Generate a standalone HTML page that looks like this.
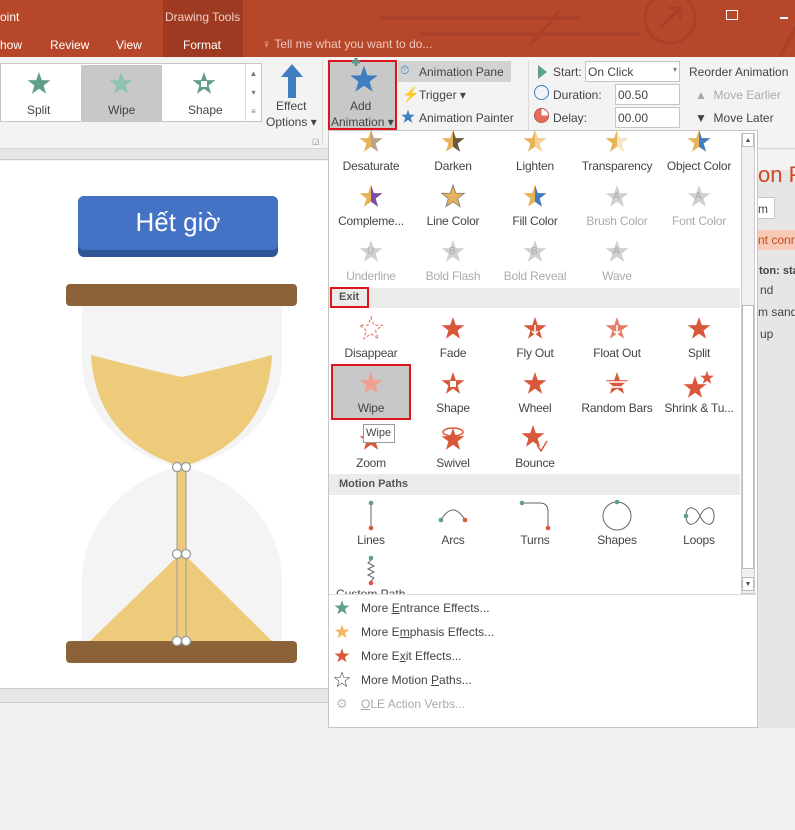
<!DOCTYPE html>
<html><head><meta charset="utf-8"><style>
*{margin:0;padding:0;box-sizing:border-box}
body{width:795px;height:728px;overflow:hidden;position:relative;background:#f0f0f0;font-family:"Liberation Sans",sans-serif;font-size:12px;color:#444}
.a{position:absolute;white-space:nowrap}
.c{position:absolute;text-align:center;width:82px;white-space:nowrap;font-size:12px;color:#444;letter-spacing:-0.2px}
.g{color:#aaa}
svg{position:absolute;overflow:visible}
.mi{position:absolute;left:361px;font-size:12px;color:#444}
</style></head><body>
<svg width="0" height="0"><defs>
<polygon id="st" points="0,-12 2.8,-3.9 11.4,-3.7 4.6,1.5 7.1,9.7 0,4.8 -7.1,9.7 -4.6,1.5 -11.4,-3.7 -2.8,-3.9"/>
</defs></svg>
<!-- title bar -->
<div class="a" style="left:0;top:0;width:795px;height:57px;background:#b7472a"></div>
<div class="a" style="left:163px;top:0;width:80px;height:57px;background:#9e3a21"></div>
<svg style="left:380px;top:0" width="415" height="57"><g stroke="#a8402a" stroke-width="3" fill="none"><circle cx="290" cy="18" r="25"/><path d="M280 28 L300 8 M288 8 h12 v12"/><path d="M0 18 H200 M40 34 H260 M150 45 L180 10"/><path d="M400 57 L430 0"/></g></svg>
<div class="a" style="left:0;top:10px;color:#fff;font-size:12px">oint</div>
<div class="a" style="left:165px;top:10px;color:#f0d0c4;font-size:12px">Drawing Tools</div>
<div class="a" style="left:0;top:38px;color:#fff">how</div>
<div class="a" style="left:50px;top:38px;color:#fff">Review</div>
<div class="a" style="left:116px;top:38px;color:#fff">View</div>
<div class="a" style="left:183px;top:38px;color:#fff">Format</div>
<div class="a" style="left:262px;top:37px;color:#f0c8bb">♀&nbsp;Tell me what you want to do...</div>
<div class="a" style="left:726px;top:10px;width:12px;height:10px;border:1px solid #fff"></div>
<div class="a" style="left:780px;top:17px;width:8px;height:2px;background:#fff"></div>
<!-- ribbon -->
<div class="a" style="left:0;top:57px;width:795px;height:92px;background:#f3f3f3;border-bottom:1px solid #d5d5d5"></div>
<div class="a" style="left:0;top:149px;width:330px;height:11px;background:#e6e6e6;border-bottom:1px solid #c8c8c8"></div>
<div class="a" style="left:0;top:63px;width:262px;height:59px;background:#fff;border:1px solid #c6c6c6"></div>
<div class="a" style="left:81px;top:65px;width:81px;height:56px;background:#c8c8c8"></div>
<div class="a" style="left:245px;top:64px;width:16px;height:57px;border-left:1px solid #ddd;font-size:8px;color:#777;text-align:center;line-height:19px">▲<br>▾<br>≡</div>
<svg style="left:39px;top:84px"><use href="#st" fill="#5f9e8a"/></svg>
<svg style="left:121px;top:84px"><use href="#st" fill="#8ec3b1"/></svg>
<svg style="left:204px;top:84px"><use href="#st" fill="#5f9e8a"/><rect x="-3" y="-3" width="6" height="6" fill="#fff"/></svg>
<div class="a" style="left:27px;top:103px">Split</div>
<div class="a" style="left:108px;top:103px">Wipe</div>
<div class="a" style="left:188px;top:103px">Shape</div>
<svg style="left:280px;top:64px" width="24" height="36"><path d="M12 0 L23 13 H16 V34 H8 V13 H1 Z" fill="#3f7ec1"/></svg>
<div class="a" style="left:276px;top:99px">Effect</div>
<div class="a" style="left:266px;top:115px">Options ▾</div>
<div class="a" style="left:312px;top:137px;font-size:8px;color:#888">◲</div>
<div class="a" style="left:322px;top:60px;width:1px;height:85px;background:#dadada"></div>
<!-- Add animation -->
<div class="a" style="left:328px;top:60px;width:69px;height:70px;background:#c8c8c8;border:2px solid #e0141e"></div>
<svg style="left:364px;top:80px"><use href="#st" fill="#3f7ec1" transform="scale(1.2)"/><path d="M-12 -18 h8 M-8 -22 v8" stroke="#5f9e8a" stroke-width="3"/></svg>
<div class="a" style="left:350px;top:99px">Add</div>
<div class="a" style="left:331px;top:115px">Animation ▾</div>
<div class="a" style="left:398px;top:61px;width:113px;height:21px;background:#d2d2d2"></div>
<div class="a" style="left:400px;top:63px;color:#3f7ec1;font-size:12px">⏱</div>
<div class="a" style="left:419px;top:65px">Animation Pane</div>
<div class="a" style="left:402px;top:86px;color:#f2c230;font-size:14px">⚡</div>
<div class="a" style="left:419px;top:88px">Trigger ▾</div>
<svg style="left:408px;top:117px"><use href="#st" fill="#3f7ec1" transform="scale(.6)"/></svg>
<div class="a" style="left:419px;top:111px">Animation Painter</div>
<div class="a" style="left:528px;top:60px;width:1px;height:85px;background:#dadada"></div>
<svg style="left:538px;top:65px" width="10" height="14"><path d="M0 0 L9 7 L0 14Z" fill="#5f9e8a"/></svg>
<div class="a" style="left:553px;top:65px">Start:</div>
<div class="a" style="left:585px;top:61px;width:95px;height:21px;background:#fff;border:1px solid #c6c6c6;padding:3px 2px">On Click<span style="float:right;font-size:8px;color:#777">▾</span></div>
<div class="a" style="left:534px;top:85px;width:15px;height:15px;border:1.5px solid #3f7ec1;border-radius:50%"></div>
<div class="a" style="left:553px;top:88px">Duration:</div>
<div class="a" style="left:615px;top:84px;width:65px;height:21px;background:#fff;border:1px solid #c6c6c6;padding:3px 2px">00.50</div>
<div class="a" style="left:534px;top:108px;width:15px;height:15px;border:1.5px solid #c0504d;border-radius:50%;background:conic-gradient(#fff 0 25%,#e36c5a 25% 100%)"></div>
<div class="a" style="left:553px;top:111px">Delay:</div>
<div class="a" style="left:615px;top:107px;width:65px;height:21px;background:#fff;border:1px solid #c6c6c6;padding:3px 2px">00.00</div>
<div class="a" style="left:689px;top:65px">Reorder Animation</div>
<div class="a" style="left:695px;top:88px;color:#aaa">▲ &nbsp;Move Earlier</div>
<div class="a" style="left:695px;top:111px">▼ &nbsp;Move Later</div>
<!-- slide -->
<div class="a" style="left:0;top:161px;width:330px;height:527px;background:#fff"></div>
<div class="a" style="left:0;top:688px;width:330px;height:15px;background:#e6e6e6;border-top:1px solid #ccc;border-bottom:1px solid #ccc"></div>
<div class="a" style="left:78px;top:196px;width:200px;height:61px;background:#2f5597;border-radius:6px"></div>
<div class="a" style="left:78px;top:196px;width:200px;height:54px;background:#4472c4;border-radius:6px;color:#fff;font-size:26px;text-align:center;line-height:52px">Hết giờ</div>
<svg style="left:0;top:0" width="330" height="700">
<path d="M82 305 H282 V360 C282 420 230 460 182 467 C230 474 282 520 282 580 V641 H82 V580 C82 520 134 474 182 467 C134 460 82 420 82 360 Z" fill="#f4f4f5"/>
<path d="M91 355 Q140 368 182 377 Q224 368 272 355 Q268 440 182 467 Q96 440 91 355Z" fill="#edcb7a"/>
<path d="M182 552 L272 641 H90 Z" fill="#edcb7a"/>
<rect x="177" y="467" width="9" height="174" fill="#edcb7a" stroke="#999" stroke-width="1"/>
<rect x="66" y="284" width="231" height="22" rx="4" fill="#8c6239"/>
<rect x="66" y="641" width="231" height="22" rx="4" fill="#8c6239"/>
<g fill="#fff" stroke="#999" stroke-width="1.3"><circle cx="177" cy="467" r="4.5"/><circle cx="186" cy="467" r="4.5"/><circle cx="177" cy="554" r="4.5"/><circle cx="186" cy="554" r="4.5"/><circle cx="177" cy="641" r="4.5"/><circle cx="186" cy="641" r="4.5"/></g>
</svg>
<!-- right pane -->
<div class="a" style="left:757px;top:150px;width:38px;height:578px;background:#e6e6e6"></div>
<div class="a" style="left:758px;top:150px;width:37px;height:20px;background:#f3f3f3"></div>
<div class="a" style="left:758px;top:162px;color:#d24726;font-size:22px">on P</div>
<div class="a" style="left:755px;top:197px;width:20px;height:22px;background:#fff;border:1px solid #c6c6c6;padding:4px 2px">m</div>
<div class="a" style="left:757px;top:230px;width:38px;height:20px;background:#f8c9b5;padding:3px 1px;color:#c04a20">nt conn</div>
<div class="a" style="left:759px;top:265px;font-weight:bold;font-size:11px">ton: sta</div>
<div class="a" style="left:760px;top:283px">nd</div>
<div class="a" style="left:758px;top:305px">m sand</div>
<div class="a" style="left:760px;top:327px">up</div>
<!-- dropdown -->
<div class="a" style="left:328px;top:130px;width:430px;height:598px;background:#fff;border:1px solid #c6c6c6"></div>
<div class="a" style="left:741px;top:133px;width:14px;height:461px;background:#f0f0f0;border:1px solid #ccc"></div>
<div class="a" style="left:742px;top:133px;width:12px;height:14px;font-size:7px;text-align:center;line-height:14px;color:#555;border:1px solid #bbb;background:#fff">▲</div>
<div class="a" style="left:742px;top:305px;width:12px;height:264px;background:#fff;border:1px solid #bbb"></div>
<div class="a" style="left:742px;top:577px;width:12px;height:14px;font-size:7px;text-align:center;line-height:14px;color:#555;border:1px solid #bbb;background:#fff">▼</div>
<div class="a" style="left:329px;top:288px;width:411px;height:20px;background:#ebebeb"></div>
<div class="a" style="left:330px;top:287px;width:39px;height:21px;border:2px solid #e0141e"></div>
<div class="a" style="left:339px;top:291px;font-weight:bold;font-size:11px;color:#555">Exit</div>
<div class="a" style="left:329px;top:474px;width:411px;height:21px;background:#ebebeb"></div>
<div class="a" style="left:339px;top:478px;font-weight:bold;font-size:11px;color:#555">Motion Paths</div>
<div class="a" style="left:331px;top:364px;width:80px;height:56px;background:#c8c8c8;border:2px solid #e0141e"></div>
<!-- emphasis stars -->
<svg style="left:371px;top:142px"><use href="#st" fill="#e8b25a"/><path d="M0 -12 V4.8 L7.1 9.7 4.6 1.5 11.4 -3.7 2.8 -3.9Z" fill="#b5a58c"/></svg>
<svg style="left:453px;top:142px"><use href="#st" fill="#e8b25a"/><path d="M0 -12 V4.8 L7.1 9.7 4.6 1.5 11.4 -3.7 2.8 -3.9Z" fill="#6a5a40"/></svg>
<svg style="left:535px;top:142px"><use href="#st" fill="#e8b25a"/><path d="M0 -12 V4.8 L7.1 9.7 4.6 1.5 11.4 -3.7 2.8 -3.9Z" fill="#f3d39a"/></svg>
<svg style="left:617px;top:142px"><use href="#st" fill="#e8b25a"/><path d="M0 -12 V4.8 L7.1 9.7 4.6 1.5 11.4 -3.7 2.8 -3.9Z" fill="#f8e6c8"/></svg>
<svg style="left:699px;top:142px"><use href="#st" fill="#e8b25a"/><path d="M0 -12 V4.8 L7.1 9.7 4.6 1.5 11.4 -3.7 2.8 -3.9Z" fill="#3f7ec1"/></svg>
<div class="c" style="left:330px;top:159px">Desaturate</div>
<div class="c" style="left:412px;top:159px">Darken</div>
<div class="c" style="left:494px;top:159px">Lighten</div>
<div class="c" style="left:576px;top:159px">Transparency</div>
<div class="c" style="left:658px;top:159px">Object Color</div>
<svg style="left:371px;top:197px"><use href="#st" fill="#e8b25a"/><path d="M0 -12 V4.8 L7.1 9.7 4.6 1.5 11.4 -3.7 2.8 -3.9Z" fill="#7b4fa8"/></svg>
<svg style="left:453px;top:197px"><use href="#st" fill="#e8b25a" stroke="#777" stroke-width=".8"/></svg>
<svg style="left:535px;top:197px"><use href="#st" fill="#e8b25a"/><path d="M0 -12 V4.8 L7.1 9.7 4.6 1.5 11.4 -3.7 2.8 -3.9Z" fill="#3f7ec1"/></svg>
<svg style="left:617px;top:197px"><use href="#st" fill="#d0d0d0"/><text x="-4" y="2" font-size="10" fill="#aaa">A</text></svg>
<svg style="left:699px;top:197px"><use href="#st" fill="#d0d0d0"/><text x="-4" y="2" font-size="10" fill="#aaa">A</text></svg>
<div class="c" style="left:330px;top:214px">Compleme...</div>
<div class="c" style="left:412px;top:214px">Line Color</div>
<div class="c" style="left:494px;top:214px">Fill Color</div>
<div class="c g" style="left:576px;top:214px">Brush Color</div>
<div class="c g" style="left:658px;top:214px">Font Color</div>
<svg style="left:371px;top:252px"><use href="#st" fill="#d0d0d0"/><text x="-4" y="2" font-size="10" fill="#aaa">U</text></svg>
<svg style="left:453px;top:252px"><use href="#st" fill="#d0d0d0"/><text x="-4" y="2" font-size="10" fill="#aaa">B</text></svg>
<svg style="left:535px;top:252px"><use href="#st" fill="#d0d0d0"/><text x="-4" y="2" font-size="10" fill="#aaa">B</text></svg>
<svg style="left:617px;top:252px"><use href="#st" fill="#d0d0d0"/><text x="-4" y="2" font-size="10" fill="#aaa">A</text></svg>
<div class="c g" style="left:330px;top:269px">Underline</div>
<div class="c g" style="left:412px;top:269px">Bold Flash</div>
<div class="c g" style="left:494px;top:269px">Bold Reveal</div>
<div class="c g" style="left:576px;top:269px">Wave</div>
<!-- exit -->
<svg style="left:371px;top:329px"><use href="#st" fill="none" stroke="#e36c5a" stroke-width="1" stroke-dasharray="3 2"/></svg>
<svg style="left:453px;top:329px"><use href="#st" fill="#d9583b"/></svg>
<svg style="left:535px;top:329px"><use href="#st" fill="#d9583b"/><path d="M0 -4 V5 M-3 2 L0 5 3 2" stroke="#fff" stroke-width="1.5" fill="none"/></svg>
<svg style="left:617px;top:329px"><use href="#st" fill="#e3806a"/><path d="M0 -4 V5 M-3 2 L0 5 3 2" stroke="#fff" stroke-width="1.5" fill="none"/></svg>
<svg style="left:699px;top:329px"><use href="#st" fill="#d9583b"/></svg>
<div class="c" style="left:330px;top:346px">Disappear</div>
<div class="c" style="left:412px;top:346px">Fade</div>
<div class="c" style="left:494px;top:346px">Fly Out</div>
<div class="c" style="left:576px;top:346px">Float Out</div>
<div class="c" style="left:658px;top:346px">Split</div>
<svg style="left:371px;top:384px"><use href="#st" fill="#f0a090"/></svg>
<svg style="left:453px;top:384px"><use href="#st" fill="#d9583b"/><rect x="-3" y="-3" width="6" height="6" fill="#fff"/></svg>
<svg style="left:535px;top:384px"><use href="#st" fill="#d9583b"/></svg>
<svg style="left:617px;top:384px"><use href="#st" fill="#d9583b"/><path d="M-10 -2 H10 M-8 3 H8" stroke="#fff" stroke-width="1.5"/></svg>
<svg style="left:695px;top:388px"><use href="#st" fill="#d9583b"/><use href="#st" fill="#d9583b" transform="translate(12,-10) scale(.6)"/></svg>
<div class="c" style="left:330px;top:401px">Wipe</div>
<div class="c" style="left:412px;top:401px">Shape</div>
<div class="c" style="left:494px;top:401px">Wheel</div>
<div class="c" style="left:576px;top:401px">Random Bars</div>
<div class="c" style="left:658px;top:401px">Shrink &amp; Tu...</div>
<svg style="left:371px;top:440px"><use href="#st" fill="#d9583b"/></svg>
<svg style="left:453px;top:440px"><use href="#st" fill="#d9583b"/><ellipse cx="0" cy="-8" rx="10" ry="4" fill="none" stroke="#d9583b" stroke-width="1.5"/></svg>
<svg style="left:533px;top:437px"><use href="#st" fill="#d9583b"/><path d="M4 8 L8 14 L14 4" stroke="#d9583b" fill="none" stroke-width="1.5"/></svg>
<div class="a" style="left:363px;top:424px;width:32px;height:19px;background:#fff;border:1px solid #999;font-size:11px;padding:2px 2px">Wipe</div>
<div class="c" style="left:330px;top:456px">Zoom</div>
<div class="c" style="left:412px;top:456px">Swivel</div>
<div class="c" style="left:494px;top:456px">Bounce</div>
<!-- motion paths -->
<svg style="left:0;top:0" width="795" height="728"><g fill="none" stroke="#666" stroke-width="1">
<path d="M371 503 V528"/><path d="M441 520 Q453 500 465 520"/><path d="M522 503 H540 Q548 503 548 512 V528"/><circle cx="617" cy="516" r="14"/><path d="M700 516 C705 505 714 505 714 516 C714 527 705 527 700 516 C695 505 686 505 686 516 C686 527 695 527 700 516"/>
<path d="M371 560 l-3 3 6 3 -6 3 6 3 -6 3 6 3 -3 3"/></g>
<g fill="#5f9e8a"><circle cx="371" cy="503" r="2.3"/><circle cx="441" cy="520" r="2.3"/><circle cx="522" cy="503" r="2.3"/><circle cx="617" cy="502" r="2.3"/><circle cx="686" cy="516" r="2.3"/><circle cx="371" cy="558" r="2.3"/></g>
<g fill="#d9583b"><circle cx="371" cy="528" r="2.3"/><circle cx="465" cy="520" r="2.3"/><circle cx="548" cy="528" r="2.3"/><circle cx="371" cy="583" r="2.3"/></g></svg>
<div class="c" style="left:330px;top:533px">Lines</div>
<div class="c" style="left:412px;top:533px">Arcs</div>
<div class="c" style="left:494px;top:533px">Turns</div>
<div class="c" style="left:576px;top:533px">Shapes</div>
<div class="c" style="left:658px;top:533px">Loops</div>
<div class="a" style="left:336px;top:587px;height:7px;overflow:hidden">Custom Path</div>
<div class="a" style="left:329px;top:594px;width:428px;height:1px;background:#ddd"></div>
<svg style="left:342px;top:608px"><use href="#st" fill="#5f9e8a" transform="scale(.65)"/></svg>
<svg style="left:342px;top:632px"><use href="#st" fill="#f2b866" transform="scale(.65)"/></svg>
<svg style="left:342px;top:656px"><use href="#st" fill="#d9583b" transform="scale(.65)"/></svg>
<svg style="left:342px;top:680px"><use href="#st" fill="none" stroke="#555" transform="scale(.65)"/></svg>
<div class="a" style="left:336px;top:696px;color:#bbb;font-size:13px">⚙</div>
<div class="mi" style="top:601px">More <u>E</u>ntrance Effects...</div>
<div class="mi" style="top:625px">More E<u>m</u>phasis Effects...</div>
<div class="mi" style="top:649px">More E<u>x</u>it Effects...</div>
<div class="mi" style="top:673px">More Motion <u>P</u>aths...</div>
<div class="mi" style="top:697px;color:#aaa"><u>O</u>LE Action Verbs...</div>
</body></html>
